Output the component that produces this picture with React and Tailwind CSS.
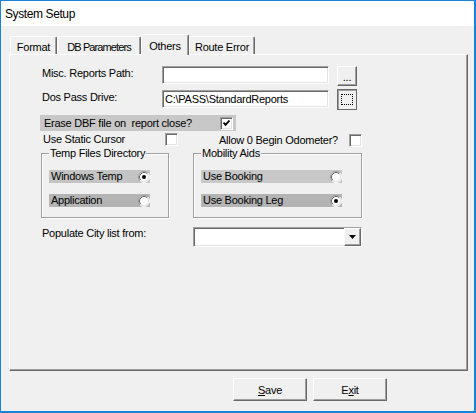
import React from "react";

// classic 3D edges
const sunken =
  "border border-t-[#a0a0a0] border-l-[#a0a0a0] border-r-white border-b-white shadow-[inset_1px_1px_0_#696969,inset_-1px_-1px_0_#e3e3e3]";
const raised =
  "border border-t-white border-l-white border-r-[#696969] border-b-[#696969] shadow-[inset_-1px_-1px_0_#a0a0a0]";

function CheckBox({ checked = false }) {
  return (
    <span className={`flex h-[13px] w-[13px] shrink-0 items-center justify-center bg-white ${sunken}`}>
      {checked && (
        <svg width="7" height="7" viewBox="0 0 7 7">
          <path d="M0.5 2.5 L2.5 4.8 L6.5 0.5" stroke="black" strokeWidth="1.8" fill="none" />
        </svg>
      )}
    </span>
  );
}

function Radio({ checked = false }) {
  return (
    <svg width="12" height="12" viewBox="0 0 12 12" className="shrink-0">
      <circle cx="6" cy="6" r="5" fill="white" />
      <path d="M2.11 9.89 A5.5 5.5 0 0 1 9.89 2.11" stroke="#a0a0a0" fill="none" />
      <path d="M2.82 9.18 A4.5 4.5 0 0 1 9.18 2.82" stroke="#696969" fill="none" />
      <path d="M9.89 2.11 A5.5 5.5 0 0 1 2.11 9.89" stroke="#ffffff" fill="none" />
      <path d="M9.18 2.82 A4.5 4.5 0 0 1 2.82 9.18" stroke="#e3e3e3" fill="none" />
      {checked && <circle cx="6" cy="6" r="2" fill="black" />}
    </svg>
  );
}

function Tab({ label, active = false, className = "" }) {
  return (
    <div
      className={`flex justify-center rounded-t-[2px] border-l border-t border-r border-l-white border-t-white border-r-[#696969] bg-[#f0f0f0] shadow-[inset_-1px_0_0_#a0a0a0] leading-[14px] whitespace-nowrap ${
        active ? "relative z-10 -mb-px h-[21px] pt-[4px]" : "h-[18px] pt-[3px]"
      } ${className}`}
    >
      {label}
    </div>
  );
}

function Group({ title, className = "", children }) {
  return (
    <div
      className={`relative flex flex-col gap-[11px] border border-[#a0a0a0] pl-[7px] pt-[16px] shadow-[inset_1px_1px_0_white,1px_1px_0_white] ${className}`}
    >
      <span className="absolute -top-[8px] left-[7px] bg-[#f0f0f0] px-[1px] leading-[14px]">{title}</span>
      {children}
    </div>
  );
}

function OptionBar({ label, checked, shade, width }) {
  return (
    <div className={`flex h-[13px] items-center justify-between pl-[2px] leading-[13px] ${shade} ${width}`}>
      <span>{label}</span>
      <Radio checked={checked} />
    </div>
  );
}

export default function App() {
  return (
    <div className="flex h-[413px] w-[476px] flex-col border-t border-l border-r-2 border-b-2 border-[#1883d7] bg-[#f0f0f0] font-['Liberation_Sans',Arial,sans-serif] text-[11px] tracking-[-0.25px] text-black">
      {/* title bar */}
      <div className="flex h-[25px] shrink-0 items-center bg-white pl-[4px] text-[12px] tracking-[-0.4px]">
        System Setup
      </div>

      <div className="pl-[8px] pt-[8px]">
        {/* tab strip */}
        <div className="flex h-[20px] items-end pl-[1px]">
          <Tab label="Format" className="w-[47px]" />
          <Tab label="DB Parameters" className="w-[84px] tracking-[-0.9px]" />
          <Tab label="Others" active className="w-[48px]" />
          <Tab label="Route Error" className="w-[66px]" />
        </div>

        {/* Others page */}
        <div className="flex h-[317px] w-[459px] flex-col border-t border-l border-r border-b border-t-white border-l-white border-r-[#696969] border-b-[#696969] pl-[30px] shadow-[inset_-1px_-1px_0_#a0a0a0]">
          <div className="mt-[11px] flex items-start">
            <span className="w-[122px] pl-[2px] leading-[14px]">Misc. Reports Path:</span>
            <div className={`h-[18px] w-[167px] bg-white ${sunken}`} />
            <button className={`ml-[8px] flex h-[20px] w-[20px] items-end justify-center bg-[#f0f0f0] pb-[3px] leading-[10px] ${raised}`}>
              ...
            </button>
          </div>

          <div className="mt-[3px] flex items-start">
            <span className="mt-[1px] w-[122px] pl-[2px] leading-[14px]">Dos Pass Drive:</span>
            <div className={`mt-[1px] flex h-[18px] w-[167px] items-center bg-white pl-[2px] leading-[14px] ${sunken}`}>
              C:\PASS\StandardReports
            </div>
            <button className="ml-[8px] flex h-[21px] w-[20px] items-center justify-center border border-[#696969] bg-[#f0f0f0] shadow-[inset_1px_1px_0_#a0a0a0]">
              <span className="h-[11px] w-[12px] border border-dotted border-black" />
            </button>
          </div>

          <div className="mt-[5px] flex h-[16px] w-[196px] items-center justify-between bg-[#c8c8c8] pl-[4px] pr-[3px]">
            <span className="whitespace-pre">Erase DBF file on  report close?</span>
            <CheckBox checked />
          </div>

          <div className="mt-[2px] flex h-[13px] items-center leading-[13px]">
            <span className="w-[125px] pl-[3px]">Use Static Cursor</span>
            <CheckBox />
            <span className="ml-[41px] mt-[2px] w-[130px]">Allow 0 Begin Odometer?</span>
            <span className="mt-[2px]">
              <CheckBox />
            </span>
          </div>

          <div className="ml-[1px] mt-[7px] flex gap-[24px]">
            <Group title="Temp Files Directory" className="h-[65px] w-[128px]">
              <OptionBar label="Windows Temp" checked shade="bg-[#c4c4c4]" width="w-[101px]" />
              <OptionBar label="Application" shade="bg-[#b4b4b4]" width="w-[101px]" />
            </Group>
            <Group title="Mobility Aids" className="h-[65px] w-[169px]">
              <OptionBar label="Use Booking" shade="bg-[#c8c8c8]" width="w-[141px]" />
              <OptionBar label="Use Booking Leg" checked shade="bg-[#b4b4b4]" width="w-[141px]" />
            </Group>
          </div>

          <div className="mt-[9px] flex items-start">
            <span className="-mt-[1px] w-[153px] pl-[2px] leading-[14px]">Populate City list from:</span>
            <div className={`flex h-[20px] w-[169px] justify-end bg-white ${sunken}`}>
              <div className={`flex w-[17px] items-center justify-center bg-[#f0f0f0] ${raised}`}>
                <svg width="7" height="4" viewBox="0 0 7 4">
                  <path d="M0 0 H7 L3.5 4 Z" fill="black" />
                </svg>
              </div>
            </div>
          </div>
        </div>
      </div>

      {/* dialog buttons */}
      <div className="flex gap-[6px] pl-[232px] pt-[7px]">
        <button className={`h-[23px] w-[74px] bg-[#f0f0f0] leading-[14px] ${raised}`}>
          <span className="underline underline-offset-[1px]">S</span>ave
        </button>
        <button className={`h-[23px] w-[74px] bg-[#f0f0f0] leading-[14px] ${raised}`}>
          E<span className="underline underline-offset-[1px]">x</span>it
        </button>
      </div>
    </div>
  );
}
